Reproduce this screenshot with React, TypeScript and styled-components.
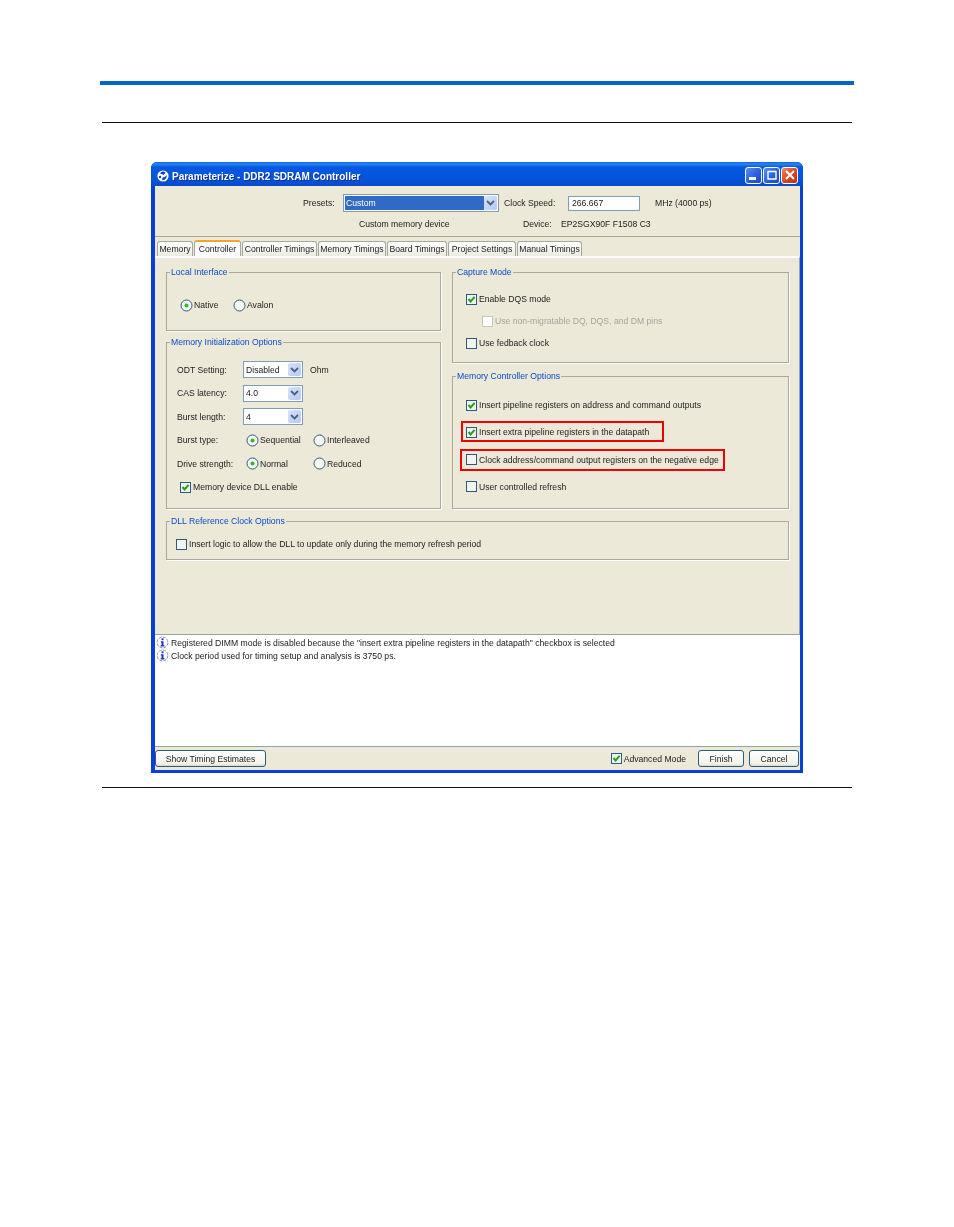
import React from 'react';
import styled, {createGlobalStyle} from "styled-components";

const GlobalStyle = createGlobalStyle`
    html, body {
        margin: 0;
        padding: 0;
        background: #fff;
    }
    body {
        font-family: "Liberation Sans", Arial, sans-serif;
        font-size: 8.65px;
        color: #222;
    }
`

const tabs = [
    {name: "Memory", width: 36},
    {name: "Controller", width: 47, active: true},
    {name: "Controller Timings", width: 75},
    {name: "Memory Timings", width: 68},
    {name: "Board Timings", width: 60},
    {name: "Project Settings", width: 68},
    {name: "Manual Timings", width: 65},
]

const Logo = () => (
    <svg width="12" height="12" viewBox="0 0 12 12">
        <circle cx="6" cy="6" r="5.6" fill="#fff"/>
        <path d="M3 3.2 A4 4 0 0 1 8.6 2.6 L6.6 5 L4.6 4 Z" fill="#0a3fb5"/>
        <path d="M9.6 5 A4 4 0 0 1 5 10 L5.6 7.4 L8 7 Z" fill="#0a3fb5"/>
        <circle cx="3" cy="7" r="1.2" fill="#0a3fb5"/>
    </svg>
)

const InfoIcon = () => (
    <svg width="13" height="13" viewBox="0 0 13 13">
        <circle cx="6.5" cy="6.5" r="5.4" fill="#fff" stroke="#8a93a8" strokeWidth="1" strokeDasharray="3 1.2"/>
        <rect x="5.5" y="2.4" width="2" height="1.8" fill="#1a2fd0"/>
        <path d="M4.8 5.2 H7.5 V9.2 H8.4 V10.4 H4.6 V9.2 H5.5 V6.4 H4.8 Z" fill="#1a2fd0"/>
    </svg>
)

const Check = ({checked, disabled}: { checked?: boolean, disabled?: boolean }) => (
    <CheckBox $disabled={disabled}>
        {checked && (
            <svg width="9" height="9" viewBox="0 0 9 9">
                <path d="M1.5 4 L3.6 6.4 L7.6 1.8" fill="none" stroke="#21a121" strokeWidth="2"/>
            </svg>
        )}
    </CheckBox>
)

const Radio = ({checked}: { checked?: boolean }) => (
    <svg width="13" height="13" viewBox="0 0 13 13">
        <circle cx="6.5" cy="6.5" r="5.5" fill="#f6f6f0" stroke="#2f5a80" strokeWidth="1"/>
        {checked && <circle cx="6.5" cy="6.5" r="2" fill="#2fb52f"/>}
    </svg>
)

const Combo = ({value, width, selected}: { value: string, width: number, selected?: boolean }) => (
    <ComboBox $width={width} $selected={selected}>
        <ComboValue $selected={selected}>{value}</ComboValue>
        <ComboArrow>
            <svg width="9" height="6" viewBox="0 0 9 6">
                <path d="M1 1 L4.5 4.5 L8 1" fill="none" stroke="#4d6185" strokeWidth="1.8"/>
            </svg>
        </ComboArrow>
    </ComboBox>
)

const Option = ({label, checked, disabled, indent, frame}: {
    label: string, checked?: boolean, disabled?: boolean, indent?: number, frame?: string
}) => (
    <OptionRow $indent={indent} $frame={frame} $disabled={disabled}>
        <Check checked={checked} disabled={disabled}/>
        <span>{label}</span>
    </OptionRow>
)

const RadioItem = ({label, checked, width}: { label: string, checked?: boolean, width: number }) => (
    <RadioLabel $width={width}>
        <Radio checked={checked}/>
        <span>{label}</span>
    </RadioLabel>
)

export default function App() {
    return (
        <Page>
            <GlobalStyle/>
            <TopBar/>
            <TopRule/>
            <Window>
                <TitleBar>
                    <Logo/>
                    <Title>Parameterize - DDR2 SDRAM Controller</Title>
                    <WindowButtons>
                        <WindowButton>
                            <svg width="9" height="9" viewBox="0 0 9 9"><rect x="0" y="6" width="7" height="3" fill="#fff"/></svg>
                        </WindowButton>
                        <WindowButton>
                            <svg width="10" height="10" viewBox="0 0 10 10"><path d="M1 1.5 H9 M1 1 V9 H9 V1" fill="none" stroke="#fff" strokeWidth="1.4"/></svg>
                        </WindowButton>
                        <WindowButton $close>
                            <svg width="10" height="10" viewBox="0 0 10 10"><path d="M1 1 L9 9 M9 1 L1 9" stroke="#fff" strokeWidth="2"/></svg>
                        </WindowButton>
                    </WindowButtons>
                </TitleBar>
                <Body>
                    <Header>
                        <HeaderRow>
                            <Cell $width={40}>Presets:</Cell>
                            <Combo value="Custom" width={156} selected/>
                            <Cell $width={69} $pad={5}>Clock Speed:</Cell>
                            <TextInput>266.667</TextInput>
                            <Cell $width={70} $pad={15}>MHz (4000 ps)</Cell>
                        </HeaderRow>
                        <HeaderNote>
                            <Cell $width={164}>Custom memory device</Cell>
                            <Cell $width={38}>Device:</Cell>
                            <Cell $width={100}>EP2SGX90F F1508 C3</Cell>
                        </HeaderNote>
                    </Header>
                    <TabStrip>
                        {tabs.map(tab => (
                            <Tab key={tab.name} $width={tab.width} $active={tab.active}>{tab.name}</Tab>
                        ))}
                    </TabStrip>
                    <TabPanel>
                        <Columns>
                            <Column $width={275} $gap={5}>
                                <Group $height={65}>
                                    <Legend>Local Interface</Legend>
                                    <RadioRow>
                                        <RadioItem label="Native" checked width={53}/>
                                        <RadioItem label="Avalon" width={50}/>
                                    </RadioRow>
                                </Group>
                                <Group $height={173}>
                                    <Legend>Memory Initialization Options</Legend>
                                    <FormRows>
                                        <FormRow>
                                            <FormLabel>ODT Setting:</FormLabel>
                                            <Combo value="Disabled" width={60}/>
                                            <Unit>Ohm</Unit>
                                        </FormRow>
                                        <FormRow>
                                            <FormLabel>CAS latency:</FormLabel>
                                            <Combo value="4.0" width={60}/>
                                        </FormRow>
                                        <FormRow>
                                            <FormLabel>Burst length:</FormLabel>
                                            <Combo value="4" width={60}/>
                                        </FormRow>
                                        <FormRow>
                                            <FormLabel>Burst type:</FormLabel>
                                            <RadioCells>
                                                <RadioItem label="Sequential" checked width={67}/>
                                                <RadioItem label="Interleaved" width={70}/>
                                            </RadioCells>
                                        </FormRow>
                                        <FormRow>
                                            <FormLabel>Drive strength:</FormLabel>
                                            <RadioCells>
                                                <RadioItem label="Normal" checked width={67}/>
                                                <RadioItem label="Reduced" width={70}/>
                                            </RadioCells>
                                        </FormRow>
                                        <FormRow>
                                            <Option label="Memory device DLL enable" checked indent={3}/>
                                        </FormRow>
                                    </FormRows>
                                </Group>
                            </Column>
                            <Column $width={337} $gap={7}>
                                <Group $height={97}>
                                    <Legend>Capture Mode</Legend>
                                    <OptionStack $top={14} $gap={8}>
                                        <Option label="Enable DQS mode" checked/>
                                        <Option label="Use non-migratable DQ, DQS, and DM pins" disabled indent={16}/>
                                        <Option label="Use fedback clock"/>
                                    </OptionStack>
                                </Group>
                                <Group $height={139}>
                                    <Legend>Memory Controller Options</Legend>
                                    <OptionStack $top={16} $gap={13.33}>
                                        <Option label="Insert pipeline registers on address and command outputs" checked/>
                                        <Option label="Insert extra pipeline registers in the datapath" checked frame="-4px -15px -3px -5px"/>
                                        <Option label="Clock address/command output registers on the negative edge" frame="-4px -6px -4px -6px"/>
                                        <Option label="User controlled refresh"/>
                                    </OptionStack>
                                </Group>
                            </Column>
                        </Columns>
                        <Group $height={45}>
                            <Legend>DLL Reference Clock Options</Legend>
                            <OptionStack $top={10} $gap={0} $left={9}>
                                <Option label="Insert logic to allow the DLL to update only during the memory refresh period"/>
                            </OptionStack>
                        </Group>
                    </TabPanel>
                    <Messages>
                        <Message><InfoIcon/><span>Registered DIMM mode is disabled because the "insert extra pipeline registers in the datapath" checkbox is selected</span></Message>
                        <Message><InfoIcon/><span>Clock period used for timing setup and analysis is 3750 ps.</span></Message>
                    </Messages>
                    <Footer>
                        <Button $width={111}>Show Timing Estimates</Button>
                        <FooterRight>
                            <Option label="Advanced Mode" checked/>
                            <FooterButtons>
                                <Button $width={46}>Finish</Button>
                                <Button $width={50}>Cancel</Button>
                            </FooterButtons>
                        </FooterRight>
                    </Footer>
                </Body>
            </Window>
            <BottomRule/>
        </Page>
    );
}

const Page = styled.div`
    width: 954px;
    height: 1227px;
    overflow: hidden;
    padding-top: 81px;
    box-sizing: border-box;
`
const TopBar = styled.div`
    width: 754px;
    height: 4px;
    margin-left: 100px;
    background: #0066cc;
`
const TopRule = styled.div`
    width: 750px;
    height: 1px;
    margin: 37px 0 0 102px;
    background: #111;
`
const BottomRule = styled(TopRule)`
    margin-top: 14px;
`
const Window = styled.div`
    width: 652px;
    height: 611px;
    margin: 39px 0 0 151px;
    display: flex;
    flex-direction: column;
    border-radius: 6px 6px 0 0;
    background: #0a3fd8;
    overflow: hidden;
    filter: blur(0.3px);
`
const TitleBar = styled.div`
    height: 24px;
    flex: none;
    box-sizing: border-box;
    display: flex;
    align-items: center;
    padding: 4px 5px 0 6px;
    background: linear-gradient(to bottom, #0a5fe6 0%, #2a86f5 8%, #0658e0 22%, #0552da 75%, #0a4cc8 100%);
`
const Title = styled.div`
    margin-left: 3px;
    color: #fff;
    font-size: 10px;
    font-weight: 700;
    text-shadow: 1px 1px 0 #0a2f9c;
`
const WindowButtons = styled.div`
    margin-left: auto;
    display: flex;
    gap: 1px;
    margin-top: -2px;
`
const WindowButton = styled.div<{ $close?: boolean }>`
    width: 17px;
    height: 17px;
    box-sizing: border-box;
    display: flex;
    align-items: center;
    justify-content: center;
    border: 1px solid #fff;
    border-radius: 3px;
    background: ${p => p.$close
        ? "linear-gradient(135deg, #e88a6c, #d8431c 55%, #c22f0c)"
        : "linear-gradient(135deg, #5f8ff0, #2a5fe0 55%, #1c48c8)"};
`
const Body = styled.div`
    flex: 1;
    min-height: 0;
    display: flex;
    flex-direction: column;
    margin: 0 3px 3px 4px;
    background: #ece9d8;
`
const Header = styled.div`
    height: 51px;
    flex: none;
    box-sizing: border-box;
    padding-top: 8px;
    border-bottom: 1px solid #a8a89c;
`
const HeaderRow = styled.div`
    display: flex;
    align-items: center;
    padding-left: 148px;
`
const HeaderNote = styled.div`
    display: flex;
    align-items: center;
    height: 14px;
    margin-top: 5px;
    padding-left: 204px;
`
const Cell = styled.div<{ $width: number, $pad?: number }>`
    flex: none;
    box-sizing: border-box;
    width: ${p => p.$width}px;
    padding-left: ${p => p.$pad || 0}px;
    white-space: nowrap;
`
const ComboBox = styled.div<{ $width: number, $selected?: boolean }>`
    flex: none;
    width: ${p => p.$width}px;
    height: ${p => p.$selected ? 18 : 17}px;
    box-sizing: border-box;
    display: flex;
    align-items: stretch;
    padding: 1px;
    border: 1px solid #7f9db9;
    background: #fff;
`
const ComboValue = styled.div<{ $selected?: boolean }>`
    flex: 1;
    display: flex;
    align-items: center;
    padding-left: 1px;
    color: ${p => p.$selected ? "#fff" : "#222"};
    background: ${p => p.$selected ? "#316ac5" : "#fff"};
`
const ComboArrow = styled.div`
    flex: none;
    width: 13px;
    display: flex;
    align-items: center;
    justify-content: center;
    border-radius: 2px;
    background: linear-gradient(135deg, #d8e4fa, #b4c8f2);
`
const TextInput = styled.div`
    flex: none;
    width: 72px;
    height: 15px;
    box-sizing: border-box;
    display: flex;
    align-items: center;
    padding-left: 3px;
    border: 1px solid #7f9db9;
    background: #fff;
`
const TabStrip = styled.div`
    height: 19px;
    flex: none;
    box-sizing: border-box;
    display: flex;
    align-items: flex-end;
    gap: 1px;
    padding-left: 2px;
`
const Tab = styled.div<{ $width: number, $active?: boolean }>`
    flex: none;
    width: ${p => p.$width}px;
    height: ${p => p.$active ? 16 : 15}px;
    box-sizing: border-box;
    display: flex;
    align-items: center;
    justify-content: center;
    white-space: nowrap;
    border: 1px solid #a3a99c;
    border-bottom: none;
    border-radius: 3px 3px 0 0;
    background: ${p => p.$active ? "#fcfcfe" : "linear-gradient(to bottom, #fff, #ecebe2)"};
    border-top: ${p => p.$active ? "2px solid #f5a623" : "1px solid #a3a99c"};
`
const TabPanel = styled.div`
    height: 378px;
    flex: none;
    box-sizing: border-box;
    padding: 8px 10px 0 11px;
    border-top: 2px solid #fcfcfe;
    border-right: 1px solid #9aa39c;
`
const Columns = styled.div`
    display: flex;
    gap: 11px;
    margin-bottom: 6px;
`
const Column = styled.div<{ $width: number, $gap: number }>`
    flex: none;
    width: ${p => p.$width}px;
    display: flex;
    flex-direction: column;
    gap: ${p => p.$gap}px;
`
const Group = styled.fieldset<{ $height: number }>`
    margin: 0;
    padding: 0;
    box-sizing: border-box;
    min-width: 0;
    height: ${p => p.$height}px;
    border: 1px solid #a8a89c;
    box-shadow: 1px 1px 0 #fff;
`
const Legend = styled.legend`
    margin-left: 3px;
    padding: 0 1px;
    line-height: 12px;
    color: #0a4cc8;
`
const RadioRow = styled.div`
    display: flex;
    padding: 20px 0 0 13px;
`
const RadioLabel = styled.div<{ $width: number }>`
    flex: none;
    width: ${p => p.$width}px;
    height: 14px;
    display: flex;
    align-items: center;
    gap: 1px;
    white-space: nowrap;
`
const FormRows = styled.div`
    display: flex;
    flex-direction: column;
    padding: 10px 0 0 10px;
`
const FormRow = styled.div`
    height: 23.5px;
    display: flex;
    align-items: center;
`
const FormLabel = styled.div`
    flex: none;
    width: 66px;
    white-space: nowrap;
`
const Unit = styled.div`
    margin-left: 7px;
`
const RadioCells = styled.div`
    display: flex;
    padding-left: 3px;
`
const OptionStack = styled.div<{ $top: number, $gap: number, $left?: number }>`
    display: flex;
    flex-direction: column;
    gap: ${p => p.$gap}px;
    padding: ${p => p.$top}px 0 0 ${p => p.$left ?? 13}px;
`
const OptionRow = styled.div<{ $indent?: number, $frame?: string, $disabled?: boolean }>`
    position: relative;
    width: fit-content;
    height: 14px;
    display: flex;
    align-items: center;
    gap: 2px;
    white-space: nowrap;
    margin-left: ${p => p.$indent || 0}px;
    color: ${p => p.$disabled ? "#a5a59c" : "#222"};
    ${p => p.$frame && `
        &::after {
            content: "";
            position: absolute;
            inset: ${p.$frame};
            border: 2px solid #f00000;
        }
    `}
`
const CheckBox = styled.div<{ $disabled?: boolean }>`
    flex: none;
    width: 11px;
    height: 11px;
    box-sizing: border-box;
    display: flex;
    align-items: center;
    justify-content: center;
    border: 1px solid ${p => p.$disabled ? "#c8c8bc" : "#2f5a80"};
    background: ${p => p.$disabled ? "#fff" : "#f4f4ee"};
`
const Messages = styled.div`
    height: 113px;
    flex: none;
    box-sizing: border-box;
    padding-top: 1px;
    border-top: 1px solid #93a3ac;
    border-bottom: 1px solid #93a3ac;
    background: #fff;
`
const Message = styled.div`
    height: 13px;
    display: flex;
    align-items: center;
    gap: 2px;
    padding-left: 1px;
    white-space: nowrap;
`
const Footer = styled.div`
    flex: 1;
    display: flex;
    align-items: flex-start;
    justify-content: space-between;
    padding: 3px 1px 0 0;
`
const FooterRight = styled.div`
    display: flex;
    align-items: center;
    gap: 12px;
`
const FooterButtons = styled.div`
    display: flex;
    gap: 5px;
`
const Button = styled.div<{ $width: number }>`
    width: ${p => p.$width}px;
    height: 17px;
    box-sizing: border-box;
    display: flex;
    align-items: center;
    justify-content: center;
    white-space: nowrap;
    border: 1px solid #2b5a82;
    border-radius: 3px;
    background: linear-gradient(to bottom, #fff, #f3f2ea 85%, #dcd8c8);
`
